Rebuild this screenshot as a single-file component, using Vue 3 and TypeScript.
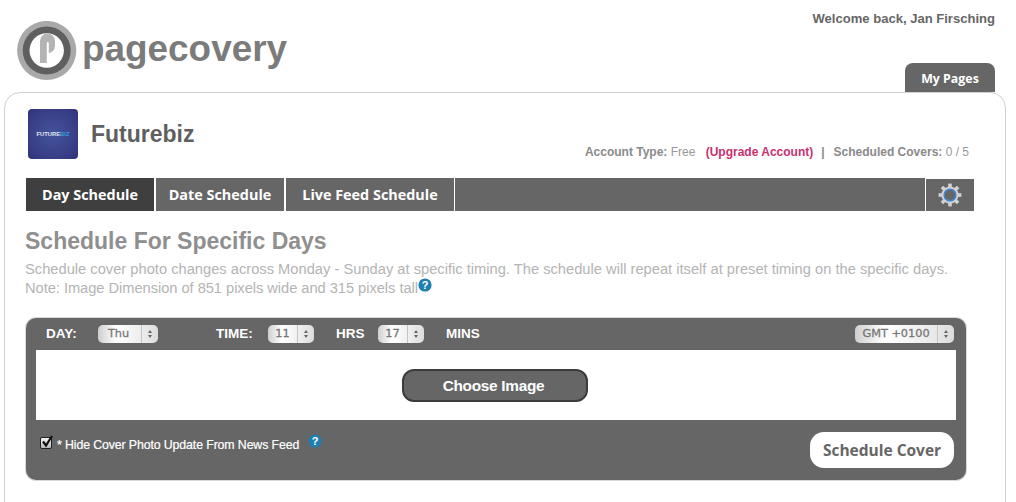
<script setup lang="ts">
const tabs: { label: string; cls: string }[] = [
  { label: 'Day Schedule', cls: 'tab-day active' },
  { label: 'Date Schedule', cls: 'tab-date' },
  { label: 'Live Feed Schedule', cls: 'tab-live' },
]
const teeth: number[] = [0, 45, 90, 135, 180, 225, 270, 315]
</script>

<template>
  <div class="page">
    <header class="top">
      <div class="brand">
        <svg class="mark" viewBox="17 21 60 60" width="60" height="60">
          <circle cx="46.7" cy="50.5" r="29.6" fill="#a9a9a9" />
          <circle cx="46.7" cy="50.5" r="24" fill="#5f5f5f" />
          <circle cx="46.7" cy="50.5" r="17.2" fill="#fff" />
          <path d="M40 63V41A7.5 7.5 0 0 1 55 41V46A7 7 0 0 1 48.8 53V43A1 1 0 0 0 46.8 43V63Z" fill="#b4b4b4" />
        </svg>
        <span class="word">pagecovery</span>
      </div>
      <div class="user">
        <div class="welcome">Welcome back, Jan Firsching</div>
        <div class="pages-tab">My Pages</div>
      </div>
    </header>

    <main class="card">
      <div class="profile">
        <div class="thumb"><span>FUTURE<b>BIZ</b></span></div>
        <h2 class="name">Futurebiz</h2>
        <div class="account">
          <b>Account Type:</b> Free
          <a class="upgrade">(Upgrade Account)</a>
          <span class="pipe">|</span>
          <b>Scheduled Covers:</b> 0 / 5
        </div>
      </div>

      <nav class="tabs">
        <div v-for="t in tabs" :key="t.label" class="tab" :class="t.cls">{{ t.label }}</div>
        <div class="tab-fill"></div>
        <div class="gear">
          <svg viewBox="0 0 24 24" width="24" height="24">
            <rect v-for="a in teeth" :key="a" x="10.2" y="0.6" width="3.6" height="5" fill="#d2d2d2" :transform="`rotate(${a} 12 12)`" />
            <circle cx="12" cy="12" r="8.6" fill="#d2d2d2" />
            <circle cx="12" cy="12" r="5.8" fill="#666" stroke="#3f86cf" stroke-width="1.6" />
          </svg>
        </div>
      </nav>

      <h1 class="title">Schedule For Specific Days</h1>
      <p class="desc">
        Schedule cover photo changes across Monday - Sunday at specific timing. The schedule will repeat itself at preset timing on the specific days.<br />
        <span class="note">Note: Image Dimension of 851 pixels wide and 315 pixels tall</span>
        <svg class="help" viewBox="0 0 14 14" width="14" height="14">
          <circle cx="7" cy="7" r="6.6" fill="#1f7fb0" />
          <text x="7" y="10.8" text-anchor="middle" class="q">?</text>
        </svg>
      </p>

      <section class="panel">
        <div class="controls">
          <span class="lbl lbl-day">DAY:</span>
          <div class="sel sel-day"><span class="val">Thu</span><span class="arrows"><i class="up"></i><i class="dn"></i></span></div>
          <span class="lbl lbl-time">TIME:</span>
          <div class="sel sel-num"><span class="val">11</span><span class="arrows"><i class="up"></i><i class="dn"></i></span></div>
          <span class="lbl lbl-hrs">HRS</span>
          <div class="sel sel-num"><span class="val">17</span><span class="arrows"><i class="up"></i><i class="dn"></i></span></div>
          <span class="lbl lbl-mins">MINS</span>
          <div class="sel sel-gmt"><span class="val">GMT +0100</span><span class="arrows"><i class="up"></i><i class="dn"></i></span></div>
        </div>
        <div class="drop">
          <div class="choose">Choose Image</div>
        </div>
        <div class="foot">
          <div class="hide">
            <span class="check">
              <svg viewBox="0 0 14 14" width="14" height="14"><path d="M3 6.5L6 10.5L12 1" fill="none" stroke="#111" stroke-width="2.2" /></svg>
            </span>
            <span class="hide-text">* Hide Cover Photo Update From News Feed</span>
            <svg class="help2" viewBox="0 0 14 14" width="14" height="14">
              <circle cx="7" cy="7" r="6.6" fill="#1f7fb0" />
              <text x="7" y="10.8" text-anchor="middle" class="q">?</text>
            </svg>
          </div>
          <div class="submit">Schedule Cover</div>
        </div>
      </section>
    </main>
  </div>
</template>

<style>
html, body { margin: 0; background: #fff; }
</style>

<style scoped>
.page {
  width: 1016px;
  height: 502px;
  overflow: hidden;
  background: #fff;
  font-family: "Liberation Sans", Arial, sans-serif;
}
.top {
  height: 92px;
  display: flex;
  justify-content: space-between;
}
.brand {
  display: flex;
  align-items: flex-start;
  padding: 21px 0 0 17px;
}
.mark { display: block; }
.word {
  margin: 6px 0 0 5px;
  font-size: 36.9px;
  line-height: 44px;
  font-weight: 700;
  color: #7b7b7b;
}
.user {
  display: flex;
  flex-direction: column;
  align-items: flex-end;
  justify-content: space-between;
  padding: 11px 21px 0 0;
}
.welcome {
  font-size: 13.05px;
  line-height: 15px;
  font-weight: 700;
  color: #666;
}
.pages-tab {
  width: 90px;
  height: 29px;
  box-sizing: border-box;
  background: #666;
  border-radius: 8px 8px 0 0;
  color: #fff;
  font: 700 12.4px/31px "Open Sans", sans-serif;
  text-align: center;
}
.card {
  width: 1002px;
  height: 460px;
  margin-left: 4px;
  box-sizing: border-box;
  border: 1px solid #d0d0d0;
  border-radius: 16px 16px 0 0;
  padding: 16px 31px 0 20px;
}
.profile {
  height: 69px;
  display: flex;
  position: relative;
  padding-left: 3px;
}
.thumb {
  width: 50px;
  height: 50px;
  border-radius: 4px;
  background: radial-gradient(circle, #43549c 0%, #3a4188 60%, #30327a 100%);
  display: flex;
  align-items: center;
  justify-content: center;
  color: #e4e8f4;
  font-size: 5.8px;
  font-weight: 700;
}
.thumb b { color: #35a4dc; }
.name {
  margin: 12px 0 0 13px;
  font-size: 23px;
  line-height: 26px;
  font-weight: 700;
  color: #5f5f5f;
}
.account {
  margin-left: auto;
  margin-top: 35px;
  margin-right: 5px;
  font-size: 12px;
  line-height: 16px;
  color: #999;
  white-space: nowrap;
}
.account b { color: #8a8a8a; }
.upgrade {
  margin-left: 7px;
  font-weight: 700;
  color: #c8316f;
}
.pipe { margin: 0 9px 0 8px; font-weight: 700; color: #8a8a8a; }
.tabs {
  height: 33px;
  margin-left: 1px;
  display: flex;
}
.tab {
  box-sizing: border-box;
  background: #666;
  color: #fff;
  font: 700 14.4px/33px "Open Sans", sans-serif;
  text-align: center;
  margin-right: 2px;
}
.tab-day { width: 128px; }
.tab-date { width: 128px; }
.tab-live { width: 168px; margin-right: 1px; }
.active { background: #3f3f3f; }
.tab-fill { flex: 1; background: #666; }
.gear {
  width: 48px;
  margin-left: 1px;
  margin-top: 1px;
  background: #666;
  display: flex;
  align-items: center;
  justify-content: center;
}
.title {
  margin: 17px 0 0 0;
  font-size: 23px;
  line-height: 27px;
  font-weight: 700;
  color: #8f8f8f;
}
.desc {
  margin: 5px 0 0 0;
  font-size: 14.7px;
  line-height: 18px;
  color: #b4b4b4;
  white-space: nowrap;
}
.note { letter-spacing: -0.05px; }
.help { vertical-align: 1px; }
.q { font: 700 11px "Liberation Sans", sans-serif; fill: #fff; }
.panel {
  width: 940px;
  height: 162px;
  margin: 21px 0 0 1px;
  box-sizing: border-box;
  background: #666;
  border-radius: 10px;
  padding: 0 10px;
  box-shadow: 0 0 0 1px #d8d8d8;
}
.controls {
  height: 32px;
  display: flex;
  align-items: center;
}
.lbl {
  font-size: 13.5px;
  font-weight: 700;
  color: #fff;
  margin-top: -2px;
}
.lbl-day { margin-left: 10px; width: 52px; }
.lbl-time { margin-left: 58px; width: 52px; }
.lbl-hrs { margin-left: 22px; width: 42px; }
.lbl-mins { margin-left: 22px; }
.sel {
  height: 18px;
  box-sizing: border-box;
  border-radius: 5px;
  background: linear-gradient(90deg, #cfcfcf 0%, #fff 30%, #eee 70%, #ddd 100%);
  display: flex;
  align-items: center;
  font: 400 11.3px/18px "DejaVu Sans", sans-serif;
  -webkit-text-stroke: 0.3px #777;
  color: #777;
}
.val { flex: 1; text-align: center; }
.sel-day .val { padding-right: 2px; }
.arrows {
  width: 17px;
  height: 18px;
  box-sizing: border-box;
  border-left: 1px solid #c4c4c4;
  display: flex;
  flex-direction: column;
  align-items: center;
  justify-content: center;
  gap: 2px;
}
.arrows i {
  display: block;
  width: 0;
  height: 0;
  border-left: 2.5px solid transparent;
  border-right: 2.5px solid transparent;
}
.up { border-bottom: 3px solid #666; }
.dn { border-top: 3px solid #666; }
.sel-day { width: 60px; }
.sel-num { width: 46px; }
.sel-gmt { width: 99px; margin-left: auto; margin-right: 2px; }
.drop {
  height: 70px;
  background: #fff;
  display: flex;
  justify-content: center;
  align-items: flex-start;
}
.choose {
  width: 186px;
  height: 33px;
  box-sizing: border-box;
  margin: 19px 2px 0 0;
  padding-right: 3px;
  background: #666;
  border: 2px solid #3c3c3c;
  border-radius: 12px;
  color: #fff;
  font-size: 15.4px;
  line-height: 30px;
  font-weight: 700;
  text-align: center;
  letter-spacing: -0.3px;
}
.foot {
  display: flex;
  justify-content: space-between;
  align-items: flex-start;
}
.hide {
  display: flex;
  align-items: center;
  margin: 14px 0 0 4px;
}
.check {
  width: 12px;
  height: 12px;
  box-sizing: border-box;
  background: linear-gradient(#f4f4f4, #bbb);
  border: 1px solid #222;
  border-radius: 2px;
  display: block;
  position: relative;
}
.check svg { position: absolute; left: -1px; top: -3px; }
.hide-text {
  margin-left: 5px;
  font-size: 12.35px;
  line-height: 14px;
  color: #fff;
  -webkit-text-stroke: 0.2px #fff;
  letter-spacing: -0.12px;
  margin-top: 4px;
}
.help2 { margin-left: 9px; margin-top: -4px; }
.submit {
  width: 144px;
  height: 36px;
  margin: 12px 2px 0 0;
  background: #fff;
  border-radius: 14px;
  color: #666;
  font: 700 15.5px/37px "Open Sans", sans-serif;
  text-align: center;
}
</style>
